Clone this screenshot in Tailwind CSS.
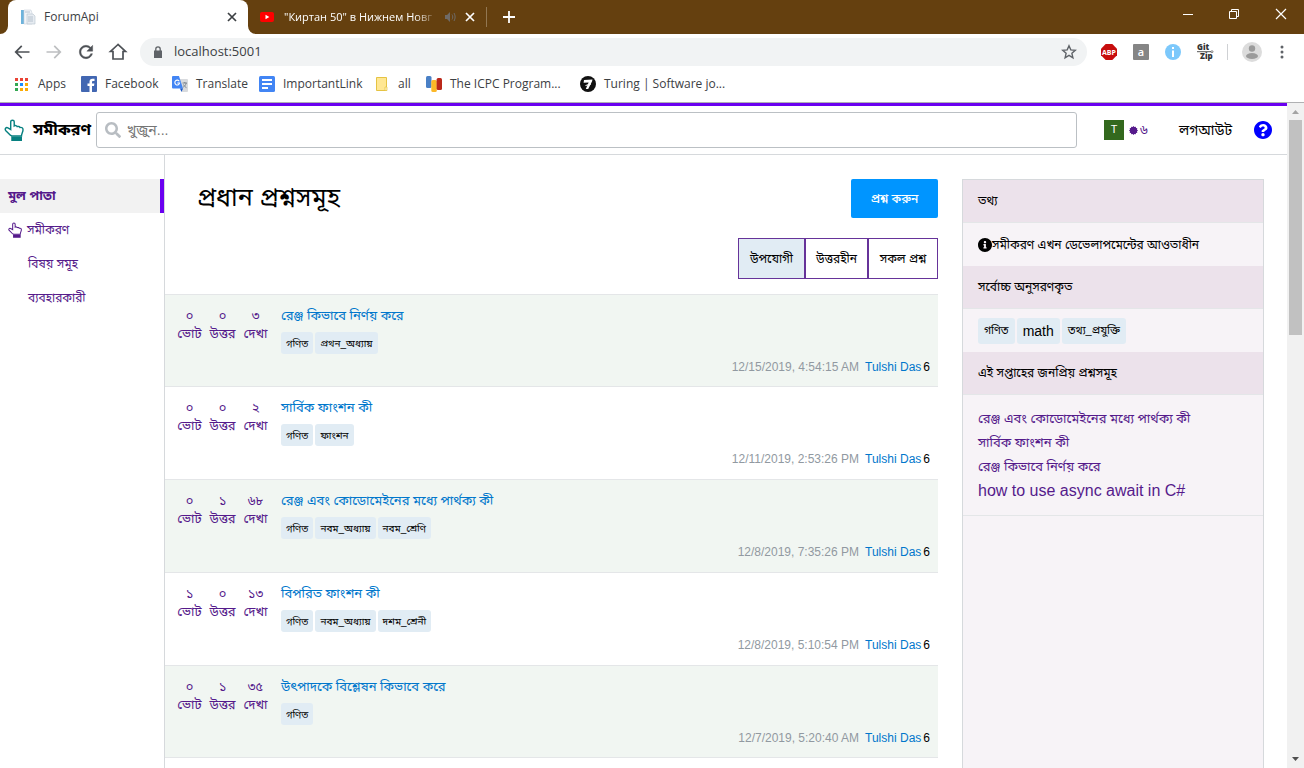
<!DOCTYPE html>
<html lang="bn">
<head>
<meta charset="utf-8">
<title>ForumApi</title>
<script src="https://cdn.jsdelivr.net/npm/@tailwindcss/browser@4"></script>
</head>
<body class="flex h-screen flex-col overflow-hidden bg-white font-['Liberation_Sans','Noto_Sans_Bengali',sans-serif] text-black">

<svg class="hidden" aria-hidden="true">
  <symbol id="hand" viewBox="0 0 18 20">
    <path d="M5.500 14.500 1.600 10.600C.2 9 1.800 7.300 3.400 8L6 9.500V2.600C6 .6 9.200.6 9.200 2.600V6.300C10.200 5.700 11.400 6 11.900 6.900 12.900 6.400 14 6.900 14.400 7.700 16 7.300 17.200 8.200 17.200 9.800 17.200 12 15.800 13 15.800 15.500H7C7 15.200 6.200 15.200 5.500 14.500Z" fill="none" stroke="currentColor" stroke-width="1.300"/>
    <path d="M6.500 16H16.300V20H6.500Z" fill="currentColor"/>
  </symbol>
</svg>

<!-- Tab strip -->
<div class="flex h-[34px] shrink-0 items-center bg-[#65400f] pl-2 font-['Open_Sans','Noto_Sans',sans-serif] text-xs text-white">
  <div class="relative flex h-full w-60 items-center rounded-t-lg bg-white pr-2 pl-3 text-[#3c4043]">
    <svg class="absolute bottom-0 -left-2 size-2" viewBox="0 0 8 8"><path d="M8 0V8H0A8 8 0 0 0 8 0Z" fill="#fff"/></svg>
    <svg class="absolute -right-2 bottom-0 size-2" viewBox="0 0 8 8"><path d="M0 0V8H8A8 8 0 0 1 0 0Z" fill="#fff"/></svg>
    <svg class="size-4" viewBox="0 0 16 16"><path d="M1 1h3v14H1z" fill="#6db3dc"/><path d="M4 1h7l1 3v11H4z" fill="#f1f4f8" stroke="#c9d2dc" stroke-width=".6"/><path d="M7 5h6l2 2v8H7z" fill="#e6ebf1" stroke="#b7c2cd" stroke-width=".6"/><path d="M5 3h5M8 8h5M8 10h5M8 12h5" stroke="#a9b7c6" stroke-width=".8"/></svg>
    <span class="ml-2 flex-1">ForumApi</span>
    <button aria-label="Close tab" class="p-0.5"><svg class="size-3" viewBox="0 0 12 12"><path d="m2 2 8 8M10 2l-8 8" stroke="#3c4043" stroke-width="1.700"/></svg></button>
  </div>
  <div class="flex h-5 w-[239px] items-center border-r border-[#927752] pr-2 pl-3">
    <svg class="h-3 w-[14px] shrink-0" viewBox="0 0 14 12"><rect y="1" width="14" height="10" rx="2" fill="#f00"/><path d="M5.500 3.800v4.400L9.300 6z" fill="#fff"/></svg>
    <span class="ml-2.5 w-[154px] text-[11px] whitespace-nowrap [mask-image:linear-gradient(to_right,#000_85%,transparent)]">"Киртан 50" в Нижнем Новг</span>
    <svg class="ml-1.5 size-3 shrink-0" viewBox="0 0 12 12"><path d="M1 4h2l3-3v10L3 8H1z" fill="#6f6a66"/><path d="M8 3.500c1 1.500 1 3.500 0 5M10 2c1.500 2.500 1.500 5.500 0 8" fill="none" stroke="#6f6a66"/></svg>
    <button aria-label="Close tab" class="ml-auto p-0.5"><svg class="size-3" viewBox="0 0 12 12"><path d="m2 2 8 8M10 2l-8 8" stroke="#fff" stroke-width="1.700"/></svg></button>
  </div>
  <button aria-label="New tab" class="ml-4"><svg class="size-3" viewBox="0 0 12 12"><path d="M6 0v12M0 6h12" stroke="#fff" stroke-width="1.800"/></svg></button>
  <div class="ml-auto flex items-center gap-9 pr-[17px] pb-1.5">
    <button aria-label="Minimize"><svg class="size-[10px]" viewBox="0 0 10 10"><path d="M0 5.500h10" stroke="#fff"/></svg></button>
    <button aria-label="Restore"><svg class="size-[10px]" viewBox="0 0 10 10"><path d="M.5 2.500h7v7h-7zM2.500 2.500v-2h7v7h-2" fill="none" stroke="#fff"/></svg></button>
    <button aria-label="Close"><svg class="size-3" viewBox="0 0 12 12"><path d="m1 1 10 10M11 1 1 11" stroke="#fff" stroke-width="1.200"/></svg></button>
  </div>
</div>

<!-- Toolbar -->
<div class="flex h-9 shrink-0 items-center pl-3 font-['Open_Sans','Noto_Sans',sans-serif] text-[#5f6368]">
  <div class="flex gap-3">
    <button aria-label="Back"><svg class="size-5" viewBox="0 0 24 24" fill="#4d5156"><path d="M21 11H6.830l5.590-5.590L11 4l-8 8 8 8 1.410-1.410L6.830 13H21z"/></svg></button>
    <button aria-label="Forward"><svg class="size-5" viewBox="0 0 24 24" fill="#bdbfc1"><path d="M3 11h14.170l-5.590-5.590L13 4l8 8-8 8-1.410-1.410L17.170 13H3z"/></svg></button>
    <button aria-label="Reload"><svg class="size-5" viewBox="0 0 24 24" fill="#4d5156" stroke="#4d5156" stroke-width=".5"><path d="M17.650 6.350C16.200 4.900 14.210 4 12 4c-4.420 0-7.990 3.580-7.990 8s3.570 8 7.990 8c3.730 0 6.840-2.550 7.730-6h-2.080c-.82 2.330-3.040 4-5.650 4-3.310 0-6-2.690-6-6s2.690-6 6-6c1.660 0 3.140.69 4.220 1.780L13 11h7V4z"/></svg></button>
    <button aria-label="Home"><svg class="size-5" viewBox="0 0 20 20"><path d="M10 2.500 2.500 9.500H5V17h10V9.500h2.500z" fill="none" stroke="#4d5156" stroke-width="1.700"/></svg></button>
  </div>
  <div class="ml-3 flex h-7 flex-1 items-center rounded-full bg-[#f1f3f4] pr-2.5 pl-3">
    <svg class="h-3 w-3" viewBox="0 0 12 12"><path d="M2 4.500h8V12H2z" fill="#5f6368"/><path d="M3.800 5V3a2.200 2.200 0 0 1 4.400 0v2" fill="none" stroke="#5f6368" stroke-width="1.300"/></svg>
    <input aria-label="Address" value="localhost:5001" class="ml-2.5 flex-1 bg-transparent text-[13px] text-[#3c4043] outline-none">
    <button aria-label="Bookmark this page"><svg class="size-4" viewBox="0 0 16 16"><path d="m8 1.800 1.800 4.100 4.500.4L10.900 9.300l1 4.500L8 11.400l-3.900 2.400 1-4.500L1.700 6.300l4.500-.4z" fill="none" stroke="#5f6368" stroke-width="1.400"/></svg></button>
  </div>
  <div class="ml-3.5 flex items-center gap-4 pr-3.5">
    <svg class="size-4" viewBox="0 0 16 16"><path d="M4.700 0h6.600L16 4.700v6.600L11.300 16H4.700L0 11.300V4.700z" fill="#c70d0d"/><text x="8" y="10.700" text-anchor="middle" font-size="7" font-weight="700" fill="#fff" font-family="Open Sans">ABP</text></svg>
    <svg class="size-4" viewBox="0 0 16 16"><rect width="16" height="16" rx="1" fill="#858585"/><text x="8" y="12" text-anchor="middle" font-size="11" font-weight="600" fill="#fff" font-family="Open Sans">a</text></svg>
    <svg class="size-4" viewBox="0 0 16 16"><circle cx="8" cy="8" r="8" fill="#7cc8fb"/><path d="M7 3h2v2H7zM7 6.500h2V13H7z" fill="#fff"/></svg>
    <svg class="size-4 overflow-visible" viewBox="0 0 16 16"><g font-size="8" font-weight="800" fill="#333" font-family="Open Sans"><text x="0" y="6">Git</text><text x="3" y="15">Zip</text></g><path d="M0 7.700h14" stroke="#555"/><circle cx="15" cy="7.700" r="1" fill="none" stroke="#555" stroke-width=".7"/></svg>
    <div class="-mx-0.5 h-4 w-px bg-[#cfd1d4]"></div>
    <svg class="-mr-1 size-5" viewBox="0 0 20 20"><circle cx="10" cy="10" r="10" fill="#dcdcdc"/><circle cx="10" cy="6.500" r="3.200" fill="#9b9b9b"/><ellipse cx="10" cy="14" rx="6" ry="3" fill="#9b9b9b"/></svg>
    <button aria-label="Menu"><svg class="size-4" viewBox="0 0 16 16" fill="#5f6368"><circle cx="8" cy="3" r="1.500"/><circle cx="8" cy="8" r="1.500"/><circle cx="8" cy="13" r="1.500"/></svg></button>
  </div>
</div>

<!-- Bookmarks -->
<nav aria-label="Bookmarks" class="flex h-[33px] shrink-0 items-center border-b border-[#b0b1b3] pb-1 pl-3.5 font-['Open_Sans','Noto_Sans',sans-serif] text-xs text-[#3c4043]">
  <a href="#" class="flex w-[67px] items-center gap-2.5"><svg class="size-[14px]" viewBox="0 0 14 14"><path d="M1 1h3v3H1zM6 1h3v3H6zM11 1h3v3h-3z" fill="#ea4335"/><path d="M1 6h3v3H1zM1 11h3v3H1z" fill="#34a853"/><path d="M6 6h3v3H6z" fill="#1a8cff"/><path d="M11 6h3v3h-3zM6 11h3v3H6zM11 11h3v3h-3z" fill="#fbab05"/></svg>Apps</a>
  <a href="#" class="flex w-[91px] items-center gap-2"><svg class="size-4" viewBox="0 0 16 16"><rect width="16" height="16" rx="1" fill="#4267b2"/><path d="M11 16V10h2l.4-2.400H11V6.200c0-.8.3-1.200 1.300-1.200h1.200V2.800h-2C9.500 2.800 8.500 4 8.500 5.800v1.800h-2V10h2v6z" fill="#fff"/></svg>Facebook</a>
  <a href="#" class="flex w-[87px] items-center gap-2"><svg class="size-4" viewBox="0 0 16 16"><path d="M6 3h9a1 1 0 0 1 1 1v11a1 1 0 0 1-1 1h-5z" fill="#d8dadd"/><path d="M0 1a1 1 0 0 1 1-1h6l4 12.500H1a1 1 0 0 1-1-1z" fill="#4285f4"/><path d="M8 12.500h3L9.500 16z" fill="#1a57c4"/><path d="M7.300 5.300A2.400 2.400 0 1 0 7.600 7H5.300" fill="none" stroke="#fff" stroke-width="1.100"/><path d="M10.500 7h4.500M12.800 6v1M14.200 7c-.4 2-1.800 3.500-3 4.200M11.500 8.500c.6 1.500 2 2.700 3 3.200" fill="none" stroke="#6a7580" stroke-width=".8"/></svg>Translate</a>
  <a href="#" class="flex w-[115px] items-center gap-2"><svg class="size-4" viewBox="0 0 16 16"><rect width="16" height="16" rx="1.500" fill="#4285f4"/><path d="M3 4h10M3 8h10M3 12h6" stroke="#fff" stroke-width="1.800"/></svg>ImportantLink</a>
  <a href="#" class="flex w-[52px] items-center gap-2"><svg class="size-4" viewBox="0 0 16 16"><path d="M2.500 1.500h10v13h-10z" fill="#ffe793" stroke="#e5c343"/><path d="M11 11h2v3.500h-2z" fill="#fff3c4" stroke="#e5c343" stroke-width=".7"/></svg>all</a>
  <a href="#" class="flex w-[154px] items-center gap-2"><svg class="size-4" viewBox="0 0 16 16"><rect y="0" width="5.500" height="12" rx="1.500" fill="#4a80c6"/><rect x="5.300" y="4" width="5.500" height="12" rx="1.500" fill="#fcb827"/><rect x="10.600" y="2" width="5.400" height="12" rx="1.500" fill="#bb281a"/></svg>The ICPC Program...</a>
  <a href="#" class="flex items-center gap-2"><svg class="size-4" viewBox="0 0 16 16"><circle cx="8" cy="8" r="8" fill="#111"/><path d="M4 4 12.500 3.500 12 5.500 8.200 13H5.800L8.600 6.500 3.600 6.800Z" fill="#fff"/><path d="M5.500 9.500 11 8" stroke="#fff"/></svg>Turing | Software jo...</a>
</nav>

<div class="flex min-h-0 flex-1">
  <div class="flex min-w-0 flex-1 flex-col border-t-[3px] border-[#6a00f0]">
    <!-- Site header -->
    <header class="flex h-[49px] shrink-0 items-center border-b border-[#d6d9dc] pr-[15px] pl-1">
      <a href="#" class="flex w-[92px] items-center gap-[9px] text-base font-bold whitespace-nowrap"><svg class="h-[22px] w-5 shrink-0 text-[#078080]"><use href="#hand"/></svg>সমীকরণ</a>
      <label class="flex h-9 flex-1 items-center gap-1.5 rounded-[3px] border border-[#bbc0c4] px-2">
        <svg class="size-4 shrink-0" viewBox="0 0 512 512" fill="#b8bdc2"><path d="M505 442.700L405.300 343c-4.500-4.500-10.600-7-17-7H372c27.600-35.300 44-79.700 44-128C416 93.100 322.900 0 208 0S0 93.100 0 208s93.100 208 208 208c48.300 0 92.700-16.400 128-44v16.300c0 6.400 2.500 12.500 7 17l99.700 99.700c9.400 9.400 24.600 9.400 33.900 0l28.300-28.300c9.400-9.400 9.400-24.600.1-34zM208 336c-70.700 0-128-57.200-128-128 0-70.700 57.200-128 128-128 70.700 0 128 57.200 128 128 0 70.700-57.200 128-128 128z"/></svg>
        <input aria-label="খুজুন" placeholder="খুজুন..." class="min-w-0 flex-1 text-sm outline-none placeholder:text-[#757575]">
      </label>
      <a href="#" class="ml-[27px] flex w-[75px] items-center text-[13px] text-[#551a8b]"><span class="mr-[5px] flex size-5 items-center justify-center bg-[#33691e] font-['Roboto'] text-[11px] text-white">T</span>
        <svg class="mr-0.5 size-[9px]" viewBox="0 0 10 10" fill="#551a8b"><path d="m5 0 1 1.200L7.500.7l.3 1.500 1.500.3L8.800 4 10 5 8.800 6l.5 1.500-1.500.3-.3 1.500L6 8.800 5 10 4 8.800l-1.500.5-.3-1.500-1.500-.3L1.200 6 0 5l1.200-1L.7 2.500l1.500-.3.300-1.500L4 1.200z"/></svg>৬</a>
      <button class="w-[75px] text-left text-sm whitespace-nowrap">লগআউট</button>
      <a href="#" aria-label="Help"><svg class="size-[18px]" viewBox="8 8 496 496" fill="#00f"><path d="M504 256c0 136.997-111.043 248-248 248S8 392.997 8 256C8 119.083 119.043 8 256 8s248 111.083 248 248zM262.655 90c-54.497 0-89.255 22.957-116.549 63.758-3.536 5.286-2.353 12.415 2.715 16.258l34.699 26.310c5.205 3.947 12.621 3.008 16.665-2.122 17.864-22.658 30.113-35.797 57.303-35.797 20.429 0 45.698 13.148 45.698 32.958 0 14.976-12.363 22.667-32.534 33.976C247.128 238.528 216 254.941 216 296v4c0 6.627 5.373 12 12 12h56c6.627 0 12-5.373 12-12v-1.333c0-28.462 83.186-29.647 83.186-106.667 0-58.002-60.165-102-116.531-102zM256 338c-25.365 0-46 20.635-46 46 0 25.364 20.635 46 46 46s46-20.636 46-46c0-25.365-20.635-46-46-46z"/></svg></a>
    </header>

    <div class="flex min-h-0 flex-1">
      <nav aria-label="মেনু" class="w-[165px] shrink-0 border-r border-[#d6d9dc] pt-6 text-xs text-[#551a8b]">
        <a href="#" class="flex h-[34px] items-center border-r-4 border-[#6a00f0] bg-[#f2f2f2] pl-2 text-[13px] font-bold">মুল পাতা</a>
        <a href="#" class="flex h-[34px] items-center gap-[5px] pl-2"><svg class="h-4 w-[14px]"><use href="#hand"/></svg>সমীকরণ</a>
        <a href="#" class="flex h-[34px] items-center pl-7">বিষয় সমূহ</a>
        <a href="#" class="flex h-[34px] items-center pl-7">ব্যবহারকারী</a>
      </nav>

      <main class="min-w-0 flex-1 pt-6">
        <div class="flex items-start justify-between pl-8">
          <h1 class="text-[25px] leading-9">প্রধান প্রশ্নসমূহ</h1>
          <button class="h-[39px] w-[87px] rounded-[2px] bg-[#0095ff] text-xs font-medium text-white">প্রশ্ন করুন</button>
        </div>
        <div class="mt-5 mb-[15px] flex justify-end text-xs">
          <button class="h-[41px] w-[67px] border border-[#663399] bg-[#e1ecf4]">উপযোগী</button>
          <button class="h-[41px] w-[63px] border border-[#663399]">উত্তরহীন</button>
          <button class="h-[41px] w-[70px] border border-[#663399]">সকল প্রশ্ন</button>
        </div>
        <div id="questions"></div>
      </main>

      <aside class="mt-6 mr-[23px] ml-6 w-[302px] shrink-0 border border-b-0 border-[#d6d9dc] bg-[#f7f3f7] text-xs">
        <h2 class="flex h-[43px] items-center border-b border-[#e4e6e8] bg-[#ece2eb] px-[15px]">তথ্য</h2>
        <p class="flex h-[43px] items-center px-[15px]"><svg class="size-[14px] shrink-0" viewBox="8 8 496 496"><path d="M256 8C119.043 8 8 119.083 8 256c0 136.997 111.043 248 248 248s248-111.003 248-248C504 119.083 392.957 8 256 8zm0 110c23.196 0 42 18.804 42 42s-18.804 42-42 42-42-18.804-42-42 18.804-42 42-42zm56 254c0 6.627-5.373 12-12 12h-88c-6.627 0-12-5.373-12-12v-24c0-6.627 5.373-12 12-12h12v-64h-12c-6.627 0-12-5.373-12-12v-24c0-6.627 5.373-12 12-12h64c6.627 0 12 5.373 12 12v100h12c6.627 0 12 5.373 12 12v24z"/></svg>সমীকরণ এখন ডেভেলাপমেন্টের আওতাধীন</p>
        <h2 class="flex h-[43px] items-center border-b border-[#e4e6e8] bg-[#ece2eb] px-[15px]">সর্বোচ্চ অনুসরণকৃত</h2>
        <div class="flex h-[43px] items-center gap-0.5 px-[15px]">
          <a href="#" class="flex h-[26px] items-center rounded-[3px] bg-[#e1ecf4] px-1.5 text-[11px]">গণিত</a>
          <a href="#" class="flex h-[26px] items-center rounded-[3px] bg-[#e1ecf4] px-1.5 text-sm">math</a>
          <a href="#" class="flex h-[26px] items-center rounded-[3px] bg-[#e1ecf4] px-1.5 text-[11px]">তথ্য_প্রযুক্তি</a>
        </div>
        <h2 class="flex h-[43px] items-center border-b border-[#e4e6e8] bg-[#ece2eb] px-[15px]">এই সপ্তাহের জনপ্রিয় প্রশ্নসমূহ</h2>
        <div class="flex flex-col border-b border-[#e4e6e8] px-[15px] py-3 text-[13px] leading-6 text-[#551a8b]">
          <a href="#">রেঞ্জ এবং কোডোমেইনের মধ্যে পার্থক্য কী</a>
          <a href="#">সার্বিক ফাংশন কী</a>
          <a href="#">রেঞ্জ কিভাবে নির্ণয় করে</a>
          <a href="#" class="text-base leading-6">how to use async await in C#</a>
        </div>
      </aside>
    </div>
  </div>

  <!-- Scrollbar -->
  <div aria-hidden="true" class="flex w-[17px] shrink-0 flex-col items-center bg-[#f1f1f1]">
    <svg class="size-[17px] shrink-0" viewBox="0 0 17 17"><path d="M5 11h7L8.500 7z" fill="#a3a3a3"/></svg>
    <div class="h-[215px] w-[13px] bg-[#c1c1c1]"></div>
    <svg class="mt-auto size-[17px] shrink-0" viewBox="0 0 17 17"><path d="M5 6h7l-3.500 4z" fill="#505050"/></svg>
  </div>
</div>

<script>
const questions = [
  { votes: '০', answers: '০', views: '৩', title: 'রেঞ্জ কিভাবে নির্ণয় করে', tags: ['গণিত', 'প্রথন_অধ্যায়'], date: '12/15/2019, 4:54:15 AM' },
  { votes: '০', answers: '০', views: '২', title: 'সার্বিক ফাংশন কী', tags: ['গণিত', 'ফাংশন'], date: '12/11/2019, 2:53:26 PM' },
  { votes: '০', answers: '১', views: '৬৮', title: 'রেঞ্জ এবং কোডোমেইনের মধ্যে পার্থক্য কী', tags: ['গণিত', 'নবম_অধ্যায়', 'নবম_শ্রেণি'], date: '12/8/2019, 7:35:26 PM' },
  { votes: '১', answers: '০', views: '১৩', title: 'বিপরিত ফাংশন কী', tags: ['গণিত', 'নবম_অধ্যায়', 'দশম_শ্রেনী'], date: '12/8/2019, 5:10:54 PM' },
  { votes: '০', answers: '১', views: '৩৫', title: 'উৎপাদকে বিশ্লেষন কিভাবে করে', tags: ['গণিত'], date: '12/7/2019, 5:20:40 AM' }
];
const stat = (n, label) => `<a href="#" class="flex w-[33px] flex-col items-center"><span>${n}</span><span class="whitespace-nowrap">${label}</span></a>`;
document.getElementById('questions').innerHTML = questions.map(q => `
  <article class="flex h-[93px] border-t border-[#e4e6e8] pl-2 first:h-[92px] last:border-b odd:bg-[#f1f6f2]">
    <div class="flex shrink-0 pt-3 text-[13px] leading-[18px] text-[#551a8b]">${stat(q.votes, 'ভোট')}${stat(q.answers, 'উত্তর')}${stat(q.views, 'দেখা')}</div>
    <div class="ml-[9px] flex min-w-0 flex-1 flex-col pt-3 pr-2">
      <a href="#" class="text-[13px] leading-[18px] text-[#0077cc]">${q.title}</a>
      <div class="mt-[7px] flex gap-0.5">${q.tags.map(t => `<a href="#" class="flex h-[22px] items-center rounded-[3px] bg-[#e1ecf4] px-[5px] text-[10px]">${t}</a>`).join('')}</div>
      <div class="mt-1 flex justify-end text-xs leading-[18px]"><time class="mr-1.5 text-[#9199a1]">${q.date}</time><a href="#" class="mr-0.5 text-[#0077cc]">Tulshi Das</a>6</div>
    </div>
  </article>`).join('');
</script>
</body>
</html>
